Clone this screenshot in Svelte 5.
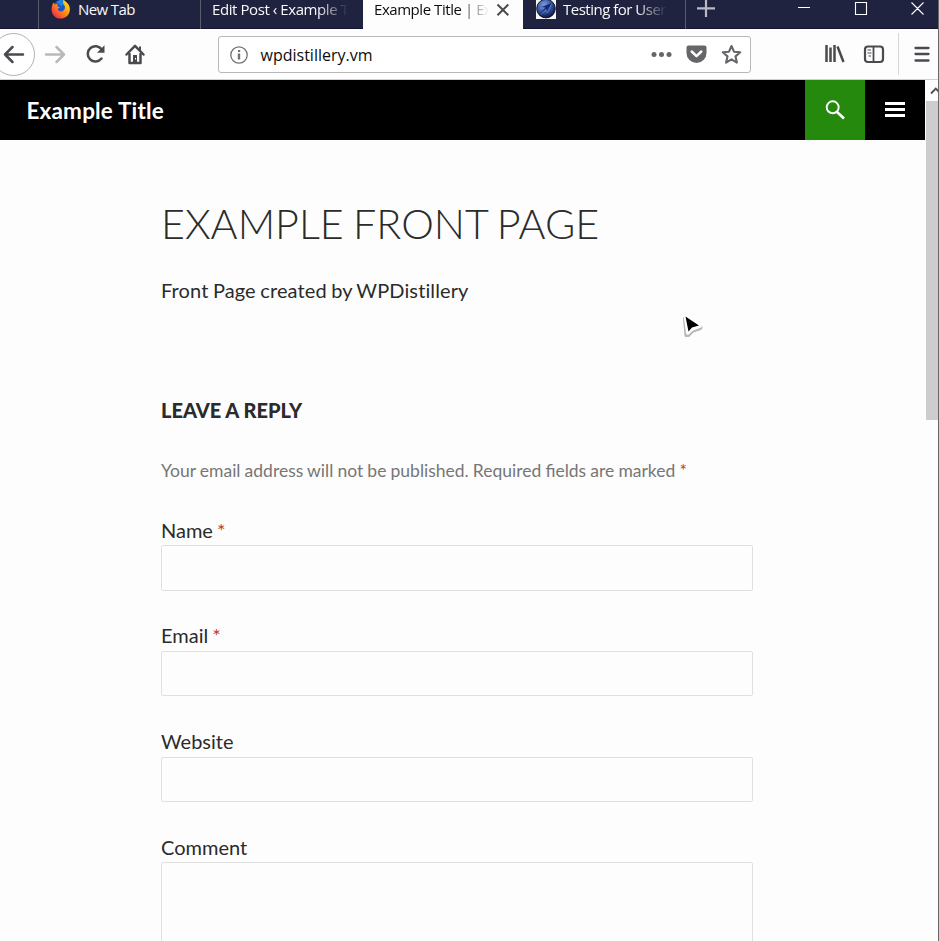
<script>
  const fields = [
    { id: 'author', label: 'Name', required: true },
    { id: 'email', label: 'Email', required: true },
    { id: 'url', label: 'Website', required: false }
  ];
</script>

<div class="window">
  <div class="tabs">
    <div class="tab first">
      <svg class="favicon" width="20" height="20" viewBox="0 0 20 20">
        <defs>
          <linearGradient id="fox" x1="1" y1="0" x2="0.1" y2="1">
            <stop offset="0" stop-color="#ffe226" />
            <stop offset="0.35" stop-color="#ffb60c" />
            <stop offset="0.65" stop-color="#ff6a21" />
            <stop offset="1" stop-color="#ed1a5b" />
          </linearGradient>
        </defs>
        <circle cx="9.8" cy="8.8" r="8.4" fill="#1b55c8" />
        <path d="M5.5 1.8C8-.8 14-.5 16 3L10 6z" fill="#1b86e0" />
        <path d="M2 2.5 4 4.5 6.8 3.8 6.2 6.2 9 7.2 7 8.6C6.6 11 9 12.3 11.3 11.2 14.4 10 14.6 6.4 12.6 4.2 12 3 12 1 12.4-.8 14 2 17.8 2.6 18.7 7.5 19.7 13.6 15.5 18.6 9.7 18.6 4 18.6.3 14.2.6 8.8.8 6.2 1.5 5 2 2.5z" fill="url(#fox)" />
      </svg>
      <span class="label newtab">New Tab</span>
    </div>
    <div class="tab second"><span class="label fade edit">Edit Post ‹ Example T</span></div>
    <div class="tab active">
      <span class="label fade title">Example Title | Ex</span>
      <svg class="close" width="14" height="14" viewBox="0 0 14 14"><path d="M1.5 1.5 12.3 12.3M12.3 1.5 1.5 12.3" stroke="#4b4b4f" stroke-width="2" fill="none" /></svg>
    </div>
    <div class="tab fourth">
      <svg class="globe" width="20" height="19" viewBox="0 0 20 19">
        <defs><radialGradient id="orb" cx=".4" cy=".3" r=".7"><stop offset="0" stop-color="#7b9bdc" /><stop offset=".55" stop-color="#3757a6" /><stop offset="1" stop-color="#0c153e" /></radialGradient></defs>
        <path d="M0 0H20V19H0z" fill="#f5f5f5" />
        <circle cx="10" cy="8.6" r="9.3" fill="url(#orb)" stroke="#10152b" />
        <path d="m15.500 3-10 4 4 .5-6 6.500 6.700-5.200.3 4z" fill="#142b72" />
        <path d="M3.500 9 8 7.700M5 14.500 10.500 9.800 11 13 15.800 3.700" stroke="#6f8ccc" stroke-width=".5" fill="none" />
      </svg>
      <span class="label fade testing">Testing for User</span>
    </div>
    <svg class="plus" width="18" height="18" viewBox="0 0 18 18"><path d="M0 8.300H18M9 0V17" stroke="#b9bac6" stroke-width="2.200" /></svg>
    <svg class="controls" width="128" height="17" viewBox="0 0 128 17"><path d="M0 8.500H12M57.500 3.500H68.500V15.500H57.500zM113.500 3.500 125.500 15.500M125.500 3.500 113.500 15.500" fill="none" stroke="#fff" stroke-width="1.100" /></svg>
  </div>

  <div class="toolbar">
    <svg class="nav" width="160" height="44" viewBox="0 0 160 44">
      <circle cx="13.500" cy="22.500" r="21" fill="#fff" stroke="#b1b1b1" />
      <g fill="none" stroke-width="2.500" stroke-linecap="round" stroke-linejoin="round">
        <path d="M23 22.500H5M12.500 15 5 22.500 12.500 30" stroke="#4b4b4f" />
        <path d="M46 22.500H64M56.500 15 64 22.500 56.500 30" stroke="#b9b9ba" />
        <path d="M101.800 17.500A7.700 7.700 0 1 0 101.500 26.600" stroke="#4b4b4f" />
        <path d="M126.500 22.500 135 13.800 143.500 22.500M129.500 22V31H140.500V22" stroke="#4b4b4f" />
      </g>
      <path d="M104.500 13.300V20.800H97z" fill="#4b4b4f" />
      <path d="M133 23H137V30.500H133zM139 14.500H141V18H139z" fill="#4b4b4f" />
      <path d="M135 26H136V27.500H135z" fill="#fff" />
    </svg>
    <div class="address">
      <svg width="18" height="18" viewBox="0 0 18 18"><circle cx="9" cy="9" r="8.200" fill="none" stroke="#737373" stroke-width="1.300" /><path d="M8 4H10.200V6H8zM7.800 7.500H10.200V13.500H7.800z" fill="#737373" /></svg>
      <span class="url">wpdistillery.vm</span>
      <svg class="actions" width="92" height="22" viewBox="0 0 92 22">
        <g fill="#66666a"><circle cx="3" cy="10.500" r="2.500" /><circle cx="10.500" cy="10.500" r="2.500" /><circle cx="18" cy="10.500" r="2.500" />
        <path d="M37.500 1.500H53.500Q55.500 1.500 55.500 3.500V9A9.800 9.800 0 0 1 35.500 9V3.500Q35.500 1.500 37.500 1.500z" /></g>
        <path d="m40.700 7.500 4.800 4.600L50.300 7.500" fill="none" stroke="#fff" stroke-width="2.500" stroke-linecap="round" stroke-linejoin="round" />
        <path d="m80.500 2 2.500 5.700 6.200.6-4.700 4.100 1.400 6.200-5.400-3.300-5.400 3.300 1.400-6.200-4.700-4.100 6.200-.6z" fill="none" stroke="#66666a" stroke-width="2.100" stroke-linejoin="round" />
      </svg>
    </div>
    <svg class="tools" width="108" height="44" viewBox="0 0 108 44">
      <g fill="none" stroke="#4b4b4f">
        <path d="M2.500 13V30M6.500 15.500V30M10.500 13V30" stroke-width="2.500" /><path d="M13.500 14.500 19.500 30" stroke-width="2.500" />
        <rect x="41" y="14.500" width="18" height="15.500" rx="3" stroke-width="2.200" /><path d="M49.500 14.500V30" stroke-width="1.800" /><path d="M43.500 18H47M43.500 21H47.500M44.500 24H47" stroke-width="1" />
        <path d="M91.500 16H104.500M91.500 22H104.500M91.500 28.500H104.500" stroke-width="2.300" stroke-linecap="round" />
      </g>
      <path d="M74.500 1V43" stroke="#d7d7db" />
    </svg>
  </div>

  <div class="viewport">
    <div class="page">
      <header>
        <span class="site-title">Example Title</span>
        <div class="search"><svg width="20" height="20" viewBox="0 0 20 20"><circle cx="7.700" cy="7.300" r="6" fill="none" stroke="#fff" stroke-width="1.900" /><path d="m12 12 7 6.500" stroke="#fff" stroke-width="2.600" /></svg></div>
        <div class="menu"><i></i><i></i><i></i></div>
      </header>
      <main>
        <h1>Example Front Page</h1>
        <p class="intro">Front Page created by WPDistillery</p>
        <h3>Leave a Reply</h3>
        <p class="notes">Your email address will not be published. Required fields are marked <b>*</b></p>
        <form>
          {#each fields as field}
            <div class="field">
              <label for={field.id}>{field.label}{#if field.required}{' '}<b>*</b>{/if}</label>
              <input id={field.id} type="text" />
            </div>
          {/each}
          <div class="field">
            <label for="comment">Comment</label>
            <textarea id="comment"></textarea>
          </div>
        </form>
      </main>
    </div>
    <div class="scrollbar">
      <svg width="12" height="21" viewBox="0 0 12 21"><path d="m5 13.500 4.800-5L14.600 13.500" fill="none" stroke="#505050" stroke-width="1.900" /></svg>
      <div class="thumb"></div>
    </div>
  </div>

  <svg class="cursor" width="26" height="28" viewBox="0 0 26 28">
    <path d="M4.500 5.500 6 22.500 8.500 22.500 13 18 20.500 15.500 21 14z" fill="#999" stroke="#999" stroke-width="3" stroke-linejoin="round" opacity=".7" />
    <path d="M5.500 4 7.800 20 12 16 20 13z" fill="#fff" stroke="#fff" stroke-width="3.500" stroke-linejoin="round" />
    <path d="M5.500 3.500 8.500 18.500 12 14.500 19 12.500z" fill="#000" />
  </svg>
</div>

<style>
  :global(body) { margin: 0; overflow: hidden; }
  .window { position: relative; box-sizing: border-box; width: 939px; height: 941px; overflow: hidden; display: flex; flex-direction: column; background: #fdfdfd; border-right: 1px solid #68686a; font-family: "Open Sans", "Noto Sans", sans-serif; }
  svg { display: block; flex: none; }
  .tabs { display: flex; height: 29px; flex: none; box-sizing: border-box; background: #202340; box-shadow: inset 0 -1px #11132f; }
  .tab { display: flex; box-sizing: border-box; height: 29px; border-right: 1px solid #5a5c70; color: #f9f9fa; flex: none; }
  .first { width: 163px; margin-left: 38px; border-left: 1px solid #5a5c70; padding-left: 12px; }
  .second { width: 162px; border-right: 0; padding-left: 11px; }
  .active { width: 160px; border: 0; background: #fdfdfd; color: #0c0c0d; padding-left: 11px; }
  .fourth { width: 163px; padding-left: 13px; }
  .label { font-size: 15px; line-height: 18px; height: 20px; white-space: nowrap; flex: none; }
  .newtab { margin-left: 7px; letter-spacing: -.6px; }
  .edit { width: 136px; letter-spacing: -.42px; }
  .title { width: 115px; letter-spacing: -.45px; }
  .testing { width: 104px; margin-left: 7px; letter-spacing: -.5px; }
  .fade { -webkit-mask-image: linear-gradient(to right, #000 calc(100% - 30px), transparent); mask-image: linear-gradient(to right, #000 calc(100% - 30px), transparent); }
  .close { margin: 3px 0 0 7px; }
  .plus { margin: 0 0 0 11px; }
  .controls { margin: -1px 0 0 83px; }
  .toolbar { height: 51px; flex: none; display: flex; align-items: flex-start; box-sizing: border-box; border-bottom: 1px solid #d0d0d2; background: #fdfdfd; padding-top: 3px; }
  .address { box-sizing: border-box; width: 533px; height: 37px; margin: 4px 0 0 58px; border: 1px solid #b8b8b8; border-radius: 3px; background: #fff; display: flex; align-items: center; padding-left: 11px; }
  .url { margin-left: 12.500px; color: #0c0c0d; font-size: 16px; line-height: 24px; letter-spacing: 0; }
  .actions { margin: 0 7px 0 auto; }
  .tools { margin-left: 73px; }
  .viewport { display: flex; flex: 1; min-height: 0; }
  .page { width: 925px; flex: none; overflow: hidden; font-family: Lato, sans-serif; color: #2b2b2b; }
  header { display: flex; align-items: center; height: 60px; background: #000; }
  .site-title { margin: 2px auto 0 26.500px; color: #fff; font-size: 22.500px; font-weight: 700; line-height: 30px; letter-spacing: .17px; }
  .search { width: 60px; height: 60px; display: flex; align-items: center; justify-content: center; background: #24890d; }
  .menu { width: 60px; display: flex; flex-direction: column; align-items: center; gap: 3px; padding-bottom: 2px; }
  .menu i { width: 20px; height: 3px; background: #fff; }
  main { width: 592px; margin-left: 161px; padding-top: 58px; }
  h1 { margin: 0; font-size: 41.250px; font-weight: 300; line-height: 50px; text-transform: uppercase; white-space: nowrap; word-spacing: -2px; }
  .intro { margin: 27px 0 0; font-size: 20px; line-height: 30px; word-spacing: -.8px; letter-spacing: .12px; font-variant-ligatures: none; }
  h3 { margin: 90px 0 0; font-size: 20px; font-weight: 900; line-height: 30px; text-transform: uppercase; }
  .notes { margin: 31px 0 0; font-size: 17.500px; line-height: 30px; color: #767676; white-space: nowrap; word-spacing: -.35px; }
  b { font-weight: 400; color: #c0392b; }
  .field { height: 75.700px; margin-top: 30px; }
  form .field:first-child { margin-top: 28.750px; }
  label { display: block; height: 30.550px; font-size: 20px; line-height: 30px; word-spacing: -1px; }
  input, textarea { display: block; box-sizing: border-box; width: 592px; height: 45.500px; border: 1px solid #e0e0e0; border-radius: 2px; background: #fdfdfd; padding: 9px; font: 20px Lato, sans-serif; }
  textarea { height: 180px; resize: none; }
  .scrollbar { width: 13px; display: flex; flex-direction: column; align-items: flex-end; background: #fdfdfd; }
  .thumb { width: 12px; height: 319px; background: #cdcdcd; }
  .cursor { position: absolute; left: 680px; top: 313px; }
</style>
